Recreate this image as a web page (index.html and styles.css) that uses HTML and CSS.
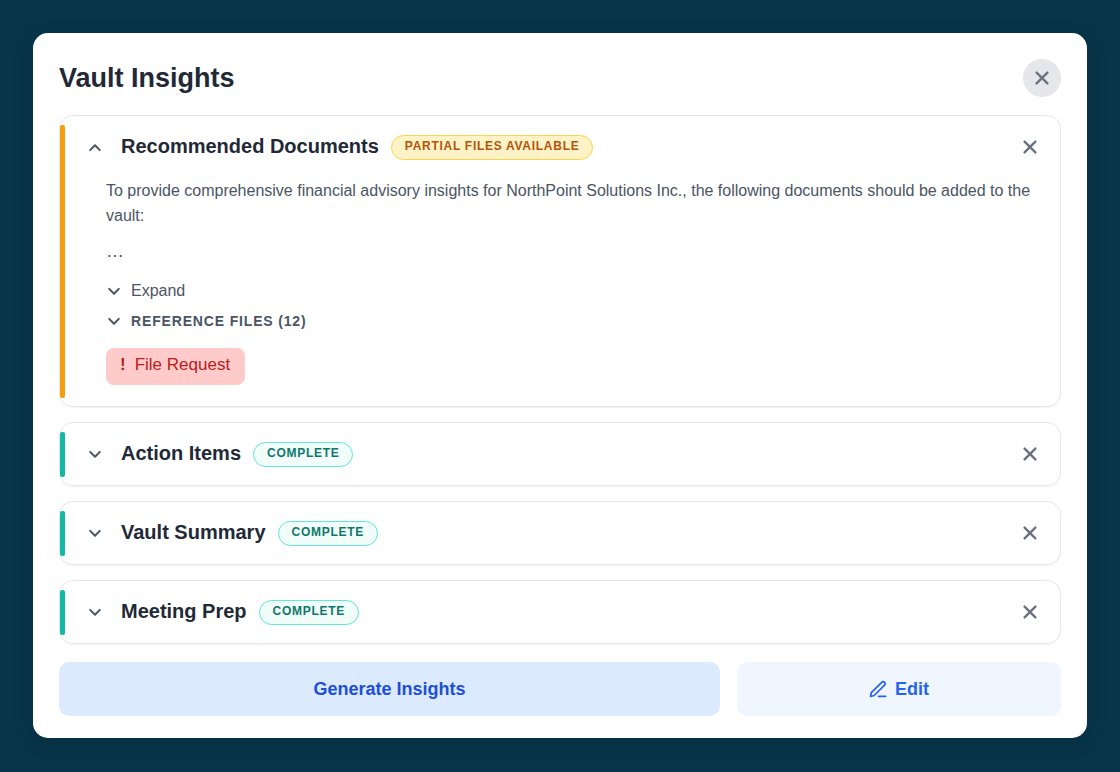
FILE: index.html
```html
<!DOCTYPE html>
<html lang="en">
<head>
  <meta charset="UTF-8">
  <meta name="viewport" content="width=device-width, initial-scale=1.0">
  <title>Vault Insights</title>
  <link rel="stylesheet" href="styles.css">
</head>
<body>

  <!-- shared icons -->
  <svg class="icon-defs" aria-hidden="true">
    <symbol id="icon-close" viewBox="0 0 16 16"><path d="M2.6 2.6l10.8 10.8M13.4 2.6L2.6 13.4"/></symbol>
    <symbol id="icon-down" viewBox="0 0 16 16"><path d="M3.2 5.9l4.8 4.8 4.8-4.8"/></symbol>
    <symbol id="icon-up" viewBox="0 0 16 16"><path d="M3.2 11.1L8 6.3l4.8 4.8"/></symbol>
  </svg>

  <main class="panel">
    <header class="panel-header">
      <h1 class="panel-title">Vault Insights</h1>
      <button type="button" class="close-btn round" aria-label="Close"><svg class="icon-x"><use href="#icon-close"/></svg></button>
    </header>

    <div class="card-list">
      <section class="card partial">
        <div class="card-header">
          <button type="button" class="toggle-btn" aria-label="Collapse Recommended Documents" aria-expanded="true"><svg class="icon-chevron"><use href="#icon-up"/></svg></button>
          <h2 class="card-title">Recommended Documents</h2>
          <span class="badge">PARTIAL FILES AVAILABLE</span>
          <button type="button" class="close-btn" aria-label="Remove Recommended Documents"><svg class="icon-x"><use href="#icon-close"/></svg></button>
        </div>
        <div class="card-body">
          <p class="card-text">To provide comprehensive financial advisory insights for NorthPoint Solutions Inc., the following documents should be added to the vault:</p>
          <p class="card-more">…</p>
          <button type="button" class="link-btn"><svg class="icon-chevron"><use href="#icon-down"/></svg>Expand</button>
          <button type="button" class="link-btn files"><svg class="icon-chevron"><use href="#icon-down"/></svg>REFERENCE FILES (12)</button>
          <button type="button" class="request-btn"><strong>!</strong>File Request</button>
        </div>
      </section>

      <section class="card">
        <div class="card-header">
          <button type="button" class="toggle-btn" aria-label="Expand Action Items" aria-expanded="false"><svg class="icon-chevron"><use href="#icon-down"/></svg></button>
          <h2 class="card-title">Action Items</h2>
          <span class="badge">COMPLETE</span>
          <button type="button" class="close-btn" aria-label="Remove Action Items"><svg class="icon-x"><use href="#icon-close"/></svg></button>
        </div>
      </section>

      <section class="card">
        <div class="card-header">
          <button type="button" class="toggle-btn" aria-label="Expand Vault Summary" aria-expanded="false"><svg class="icon-chevron"><use href="#icon-down"/></svg></button>
          <h2 class="card-title">Vault Summary</h2>
          <span class="badge">COMPLETE</span>
          <button type="button" class="close-btn" aria-label="Remove Vault Summary"><svg class="icon-x"><use href="#icon-close"/></svg></button>
        </div>
      </section>

      <section class="card">
        <div class="card-header">
          <button type="button" class="toggle-btn" aria-label="Expand Meeting Prep" aria-expanded="false"><svg class="icon-chevron"><use href="#icon-down"/></svg></button>
          <h2 class="card-title">Meeting Prep</h2>
          <span class="badge">COMPLETE</span>
          <button type="button" class="close-btn" aria-label="Remove Meeting Prep"><svg class="icon-x"><use href="#icon-close"/></svg></button>
        </div>
      </section>
    </div>

    <footer class="actions">
      <button type="button" class="action-btn generate">Generate Insights</button>
      <button type="button" class="action-btn edit">
        <svg class="icon-pen" viewBox="0 0 18 18"><path d="M1.5 16.5l.8-3.8L12.7 2.3a1.9 1.9 0 0 1 2.8 2.8L5.2 15.5zM9.6 16.3h7"/></svg>
        Edit
      </button>
    </footer>
  </main>

</body>
</html>
```
FILE: styles.css
```css
* {
  margin: 0;
  padding: 0;
  box-sizing: border-box;
}

body {
  min-height: 100vh;
  padding: 33px;
  background-color: #083549;
  font-family: "Liberation Sans", Arial, sans-serif;
  color: #1f2937;
}

button {
  border: 0;
  background: none;
  font: inherit;
  color: inherit;
  cursor: pointer;
}

/* icons */
svg {
  flex-shrink: 0;
  fill: none;
  stroke: currentColor;
  stroke-width: 2;
  stroke-linecap: round;
  stroke-linejoin: round;
}
.icon-defs {
  display: none;
}
.icon-x,
.icon-chevron {
  width: 16px;
  height: 16px;
}
.icon-x {
  stroke-width: 2.4;
}
.icon-pen {
  width: 18px;
  height: 18px;
  stroke-width: 1.7;
}

/* panel */
.panel {
  padding: 26px 26px 22px;
  border-radius: 15px;
  background-color: #fff;
  box-shadow: 0 4px 20px rgba(0, 0, 0, 0.15);
}
.panel-header {
  display: flex;
  align-items: center;
  justify-content: space-between;
  margin-bottom: 18px;
}
.panel-title {
  font-size: 27px;
  line-height: 38px;
}

.close-btn {
  display: flex;
  align-items: center;
  justify-content: center;
  width: 38px;
  height: 38px;
  border-radius: 50%;
  color: #6b7280;
}
.close-btn.round {
  background-color: #e5e7eb;
}

/* cards */
.card-list {
  display: grid;
  gap: 15px;
}
.card {
  position: relative;
  border: 1px solid #e5e7eb;
  border-radius: 14px;
  box-shadow: 0 1px 2px rgba(0, 0, 0, 0.06);
}
.card::before {
  content: '';
  position: absolute;
  top: 9px;
  bottom: 8px;
  left: 0;
  width: 5px;
  border-radius: 2px;
  background-color: #14b8a6;
}
.card.partial::before {
  background-color: #f59e0b;
}
.card-header {
  display: flex;
  align-items: center;
  height: 62px;
  padding: 0 11px 0 23px;
}
.toggle-btn {
  display: flex;
  align-items: center;
  justify-content: center;
  width: 24px;
  height: 24px;
  margin-right: 14px;
  color: #4b5563;
}
.card-title {
  padding-bottom: 2px;
  font-size: 20px;
  line-height: 24px;
}
.badge {
  margin-left: 12px;
  padding: 3px 13px 6px;
  border: 1px solid #5eead4;
  border-radius: 13px;
  background-color: #f0fdf8;
  font-size: 12px;
  font-weight: bold;
  line-height: 14px;
  letter-spacing: 0.06em;
  color: #0f766e;
}
.partial .badge {
  border-color: #fcd34d;
  background-color: #fef3c7;
  color: #b45309;
}
.card-header .close-btn {
  margin-left: auto;
}

.card-body {
  display: flex;
  flex-direction: column;
  align-items: flex-start;
  padding: 0 16px 21px 46px;
  font-size: 16px;
  color: #4b5563;
}
.card-text,
.card-more {
  line-height: 25px;
}
.card-more {
  margin: 11px 0 12px;
  font-size: 18px;
}
.link-btn {
  display: flex;
  align-items: center;
  gap: 9px;
  height: 30px;
}
.link-btn.files {
  font-size: 14px;
  font-weight: bold;
  letter-spacing: 0.06em;
}
.request-btn {
  display: flex;
  gap: 9px;
  margin-top: 12px;
  padding: 7px 15px 10px 14px;
  border-radius: 8px;
  background-color: #fecaca;
  font-size: 17px;
  line-height: 20px;
  color: #b91c1c;
}

/* bottom buttons */
.actions {
  display: grid;
  grid-template-columns: 51fr 25fr;
  gap: 17px;
  margin-top: 18px;
}
.action-btn {
  display: flex;
  align-items: center;
  justify-content: center;
  gap: 8px;
  height: 54px;
  border-radius: 10px;
  font-size: 18px;
  font-weight: bold;
}
.generate {
  background-color: #dbeafe;
  color: #1d4ed8;
}
.edit {
  background-color: #eff6ff;
  color: #2563eb;
}
```
